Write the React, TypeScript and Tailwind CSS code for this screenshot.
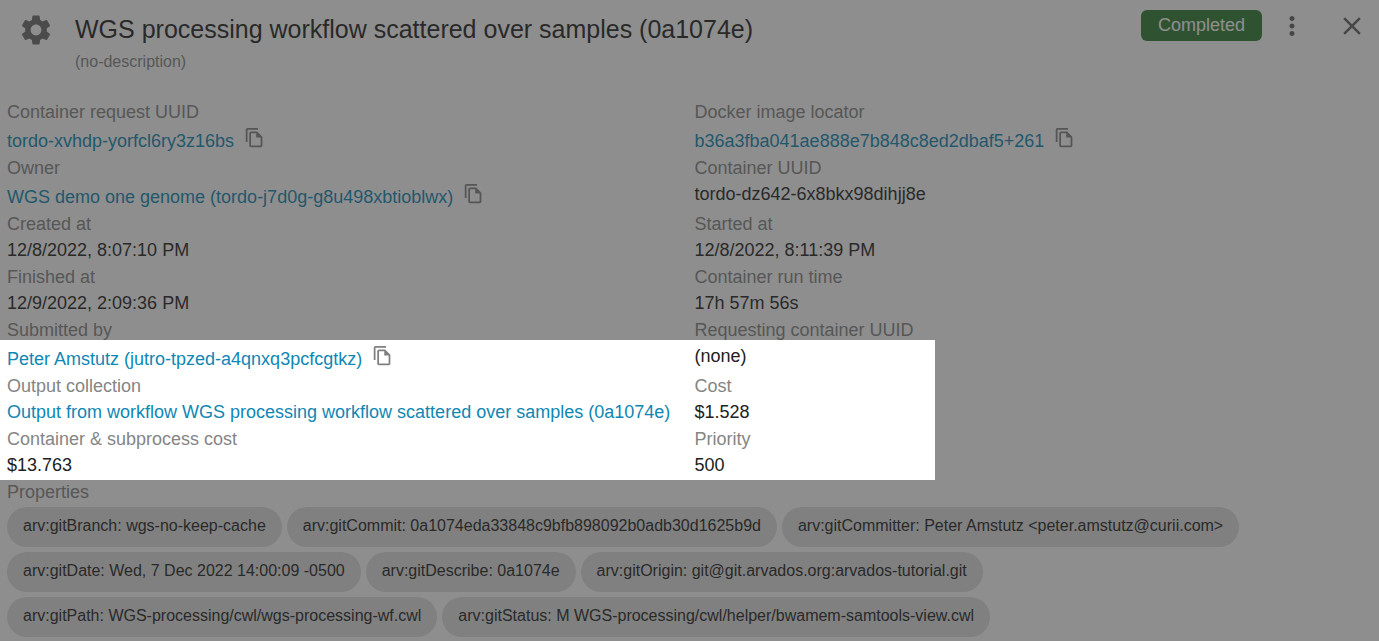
import { MdClose, MdMoreVert, MdOutlineFileCopy, MdSettings } from "react-icons/md";

type Field = {
  label: string;
  value: string;
  link?: boolean;
  copy?: boolean;
};

// Listed row by row: left column, right column
const fields: Field[] = [
  { label: "Container request UUID", value: "tordo-xvhdp-yorfcl6ry3z16bs", link: true, copy: true },
  { label: "Docker image locator", value: "b36a3fba041ae888e7b848c8ed2dbaf5+261", link: true, copy: true },
  { label: "Owner", value: "WGS demo one genome (tordo-j7d0g-g8u498xbtioblwx)", link: true, copy: true },
  { label: "Container UUID", value: "tordo-dz642-6x8bkx98dihjj8e" },
  { label: "Created at", value: "12/8/2022, 8:07:10 PM" },
  { label: "Started at", value: "12/8/2022, 8:11:39 PM" },
  { label: "Finished at", value: "12/9/2022, 2:09:36 PM" },
  { label: "Container run time", value: "17h 57m 56s" },
  { label: "Submitted by", value: "Peter Amstutz (jutro-tpzed-a4qnxq3pcfcgtkz)", link: true, copy: true },
  { label: "Requesting container UUID", value: "(none)" },
  { label: "Output collection", value: "Output from workflow WGS processing workflow scattered over samples (0a1074e)", link: true },
  { label: "Cost", value: "$1.528" },
  { label: "Container & subprocess cost", value: "$13.763" },
  { label: "Priority", value: "500" },
];

const properties = [
  "arv:gitBranch: wgs-no-keep-cache",
  "arv:gitCommit: 0a1074eda33848c9bfb898092b0adb30d1625b9d",
  "arv:gitCommitter: Peter Amstutz <peter.amstutz@curii.com>",
  "arv:gitDate: Wed, 7 Dec 2022 14:00:09 -0500",
  "arv:gitDescribe: 0a1074e",
  "arv:gitOrigin: git@git.arvados.org:arvados-tutorial.git",
  "arv:gitPath: WGS-processing/cwl/wgs-processing-wf.cwl",
  "arv:gitStatus: M WGS-processing/cwl/helper/bwamem-samtools-view.cwl",
];

const DetailField = ({ label, value, link, copy }: Field) => (
  <div className="min-w-0 whitespace-nowrap">
    <dt className="leading-[26px] text-[#858585]">{label}</dt>
    <dd className={copy ? "flex h-[30px] items-end gap-[10px] leading-[27px]" : "leading-[27px]"}>
      {link ? (
        <a href="#" className="text-[#0f87b4]">
          {value}
        </a>
      ) : (
        value
      )}
      {copy && (
        <button type="button" aria-label={`Copy ${label}`} className="mb-[7px] text-[#808080]">
          <MdOutlineFileCopy size={21} />
        </button>
      )}
    </dd>
  </div>
);

const App = () => {
  return (
    <main className="relative min-h-screen overflow-hidden bg-white font-['Liberation_Sans',Arial,sans-serif] text-lg text-[#212121]">
      <header className="flex items-start justify-between pt-[10px] pr-3 pl-4">
        <div className="flex gap-[19px]">
          <MdSettings className="size-10 p-0.5 text-[#6b6b6b]" />
          <div>
            <h1 className="text-[25px] leading-[38px]">WGS processing workflow scattered over samples (0a1074e)</h1>
            <p className="text-base leading-[28px] text-[#858585]">(no-description)</p>
          </div>
        </div>
        <div className="flex items-center text-[#616161]">
          <span className="rounded-md bg-[#2e7d32] px-[17px] leading-[31px] text-white">Completed</span>
          <button type="button" aria-label="More options" className="ml-[15px]">
            <MdMoreVert size={30} />
          </button>
          <button type="button" aria-label="Close" className="ml-[30px]">
            <MdClose size={30} />
          </button>
        </div>
      </header>

      <section className="px-[7px] pt-[23px] pb-1">
        <dl className="grid grid-cols-2 gap-x-[10px]">
          {fields.map((field) => (
            <DetailField key={field.label} {...field} />
          ))}
        </dl>

        <h2 className="leading-[26px] text-[#858585]">Properties</h2>
        <ul className="mt-[2px] flex flex-wrap gap-[5px]">
          {properties.map((property) => (
            <li key={property} className="h-10 rounded-full bg-[#e0e0e0] px-4 text-base leading-[38px]">
              {property}
            </li>
          ))}
        </ul>
      </section>

      {/* Spotlight: its shadow dims everything outside the cost fields */}
      <div className="pointer-events-none absolute top-[340px] left-0 h-[140px] w-[935px] shadow-[0_0_0_2000px_rgba(50,50,50,0.55)]" />
    </main>
  );
};

export default App;
